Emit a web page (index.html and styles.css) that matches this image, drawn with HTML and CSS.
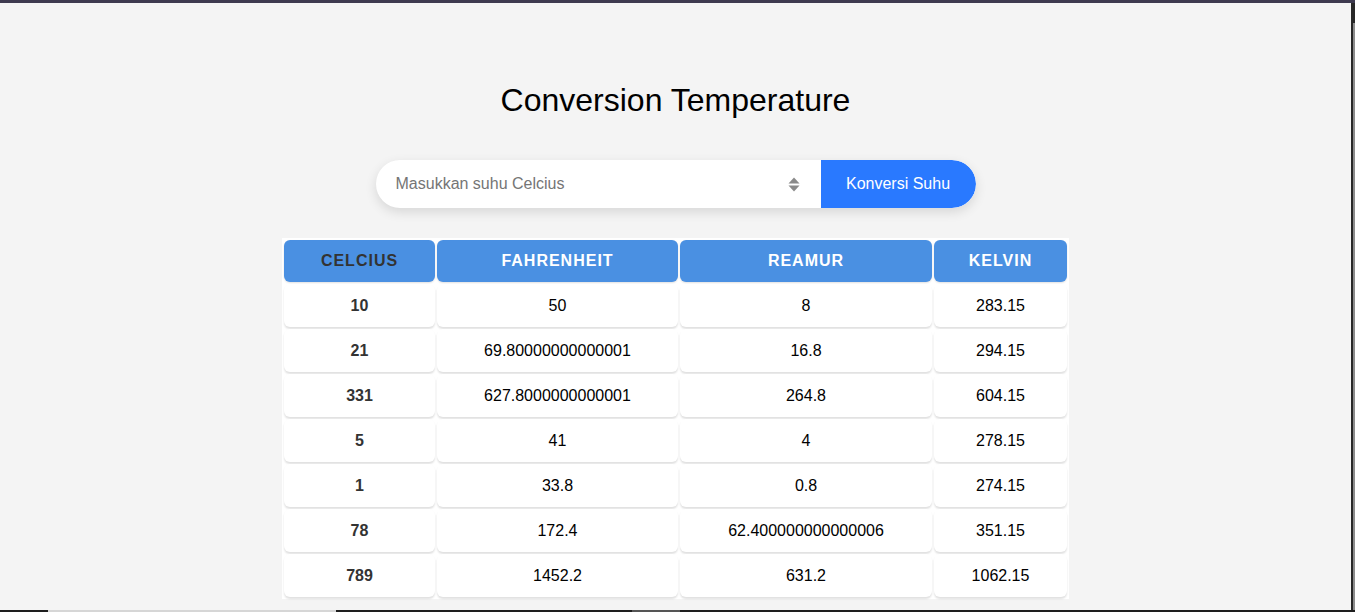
FILE: index.html
```html
<!DOCTYPE html>
<html lang="id">
<head>
<meta charset="utf-8">
<title>Conversion Temperature</title>
<link rel="stylesheet" href="styles.css">
</head>
<body>
<div class="screen">
  <main class="page">
    <h1 class="title">Conversion Temperature</h1>
    <form class="converter" onsubmit="return false;">
      <div class="field">
        <input class="field-input" type="text" placeholder="Masukkan suhu Celcius">
        <svg class="spinner" width="12" height="17" viewBox="0 0 12 17" aria-hidden="true">
          <path d="M6 1.5 L11.5 7.5 H0.5 Z" fill="#8a8a8a"/>
          <path d="M6 15.5 L11.5 9.5 H0.5 Z" fill="#8a8a8a"/>
        </svg>
      </div>
      <button class="convert-btn" type="submit">Konversi Suhu</button>
    </form>
    <table class="results">
      <colgroup>
        <col class="c-cel"><col class="c-fah"><col class="c-rea"><col class="c-kel">
      </colgroup>
      <thead>
        <tr><th class="first">Celcius</th><th>Fahrenheit</th><th>Reamur</th><th>Kelvin</th></tr>
      </thead>
      <tbody>
        <tr><td class="first">10</td><td>50</td><td>8</td><td>283.15</td></tr>
        <tr><td class="first">21</td><td>69.80000000000001</td><td>16.8</td><td>294.15</td></tr>
        <tr><td class="first">331</td><td>627.8000000000001</td><td>264.8</td><td>604.15</td></tr>
        <tr><td class="first">5</td><td>41</td><td>4</td><td>278.15</td></tr>
        <tr><td class="first">1</td><td>33.8</td><td>0.8</td><td>274.15</td></tr>
        <tr><td class="first">78</td><td>172.4</td><td>62.400000000000006</td><td>351.15</td></tr>
        <tr><td class="first">789</td><td>1452.2</td><td>631.2</td><td>1062.15</td></tr>
      </tbody>
    </table>
  </main>
  <div class="edge"><div class="edge-thumb"></div></div>
  <div class="taskbar">
    <span class="tb-gap1"></span><span class="tb-light"></span><span class="tb-gap2"></span><span class="tb-gray"></span>
  </div>
</div>
</body>
</html>
```
FILE: styles.css
```css
html, body {
  margin: 0;
  padding: 0;
  background: #f4f4f4;
  overflow: hidden;
}

.screen {
  position: relative;
  display: flex;
  height: 612px;
  border-top: 3px solid #3e3a4f;
  box-sizing: border-box;
  overflow: hidden;
  font-family: "Liberation Sans", Arial, sans-serif;
}

.page {
  flex: 1;
  padding-top: 79px;
  background: #f4f4f4;
}

.title {
  margin: 0;
  font-size: 32px;
  line-height: 37px;
  font-weight: normal;
  text-align: center;
  color: #000;
}

.converter {
  display: flex;
  width: 600px;
  height: 48px;
  margin: 41px auto 0;
  border-radius: 24px;
  background: #fff;
  box-shadow: 0 4px 12px rgba(0, 0, 0, 0.12);
  overflow: hidden;
}

.field {
  flex: 1;
  display: flex;
  align-items: center;
  padding: 0 21px 0 20px;
}

.field-input {
  flex: 1;
  border: 0;
  outline: 0;
  padding: 0;
  background: transparent;
  font-family: "Liberation Sans", Arial, sans-serif;
  font-size: 16px;
  color: #222;
}

.field-input::placeholder {
  color: #757575;
}

.spinner {
  display: block;
  margin-top: 1px;
}

.convert-btn {
  width: 155px;
  border: 0;
  padding: 0;
  background: #2979ff;
  color: #fff;
  font-family: "Liberation Sans", Arial, sans-serif;
  font-size: 16px;
  border-radius: 0 24px 24px 0;
}

.results {
  width: 787px;
  margin: 30px auto 0;
  table-layout: fixed;
  border-collapse: separate;
  border-spacing: 2px;
  background: #fff;
}

.c-cel { width: 151px; }
.c-fah { width: 241px; }
.c-rea { width: 252px; }
.c-kel { width: 133px; }

.results th {
  height: 42px;
  padding: 0 8px;
  box-sizing: border-box;
  background: #4a90e2;
  color: #fff;
  font-size: 16px;
  line-height: 18px;
  font-weight: bold;
  text-transform: uppercase;
  letter-spacing: 1px;
  text-align: center;
  border-radius: 6px;
  box-shadow: 0 1px 2px rgba(0, 0, 0, 0.12);
}

.results th.first {
  color: #333;
}

.results td {
  height: 43px;
  padding: 0 8px;
  box-sizing: border-box;
  background: #fff;
  color: #000;
  font-size: 16px;
  line-height: 19px;
  text-align: center;
  border-radius: 6px;
  box-shadow: 0 2px 2px rgba(0, 0, 0, 0.12);
}

.results td.first {
  font-weight: bold;
  color: #333;
}

.edge {
  width: 4px;
  background: #282828;
  padding-top: 20px;
  display: flex;
  justify-content: flex-end;
}

.edge-thumb {
  width: 2px;
  height: 100%;
  background: #8c8c8c;
}

.taskbar {
  position: absolute;
  left: 0;
  right: 0;
  bottom: 0;
  height: 2px;
  display: flex;
  background: #1e1e1e;
}

.tb-gap1 { width: 48px; }
.tb-light { width: 288px; background: #d6d6d6; }
.tb-gap2 { width: 296px; }
.tb-gray { width: 48px; background: #555; }
```
